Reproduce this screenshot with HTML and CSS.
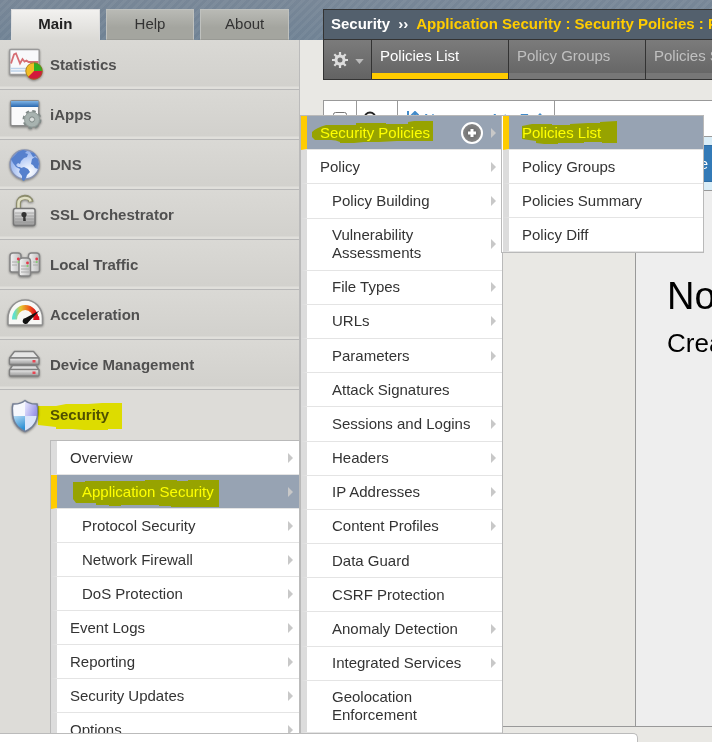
FILE: index.html
```html
<!DOCTYPE html>
<html lang="en">
<head>
<meta charset="utf-8">
<title>Application Security: Policies List</title>
<link rel="stylesheet" href="styles.css">
</head>
<body>
<svg class="defs" aria-hidden="true">
  <defs>
    <linearGradient id="metal" x2="0" y2="1"><stop offset="0" stop-color="#f1f1f1"/><stop offset=".5" stop-color="#c2c2c2"/><stop offset="1" stop-color="#9a9a9a"/></linearGradient>
    <linearGradient id="server" x2="1" y2="0"><stop offset="0" stop-color="#f4f4f4"/><stop offset="1" stop-color="#bcbcbc"/></linearGradient>
    <linearGradient id="titlebar" x2="0" y2="1"><stop offset="0" stop-color="#7fb4e6"/><stop offset="1" stop-color="#2b68ae"/></linearGradient>
    <linearGradient id="dial" x2="1" y2="0"><stop offset="0" stop-color="#5fe0cf"/><stop offset=".3" stop-color="#e6c52d"/><stop offset=".65" stop-color="#f0641c"/><stop offset="1" stop-color="#dd0a18"/></linearGradient>
    <radialGradient id="ocean" cx=".65" cy=".75" r=".8"><stop offset="0" stop-color="#ffffff"/><stop offset=".5" stop-color="#c5d6f8"/><stop offset="1" stop-color="#82a5e8"/></radialGradient>
    <linearGradient id="shieldblue" x2=".4" y2="1"><stop offset="0" stop-color="#b8dcf4"/><stop offset="1" stop-color="#2b8fd4"/></linearGradient>
    <linearGradient id="shieldviolet" x2="1" y2=".4"><stop offset="0" stop-color="#e9e9ff"/><stop offset="1" stop-color="#9c98e8"/></linearGradient>
    <radialGradient id="plusfill"><stop offset="0" stop-color="#636363"/><stop offset="1" stop-color="#8a8a8a"/></radialGradient>
  </defs>
</svg>

<div class="app">
  <aside class="sidebar">
    <nav class="modes" aria-label="Console sections">
      <a class="mode mode-current" href="#">Main</a>
      <a class="mode" href="#">Help</a>
      <a class="mode" href="#">About</a>
    </nav>
    <nav class="modules" aria-label="Modules">
      <a class="module" href="#">
        <svg class="module-icon" viewBox="0 0 40 40" aria-hidden="true">
          <rect x="5.700" y="6.500" width="29.500" height="25" rx="1" fill="#f8f9fb" stroke="#999" stroke-width="1.500"/>
          <path d="M6.500 25.500h28M6.500 28h28" stroke="#bcd2ea" stroke-width="1.600"/>
          <path d="M7 20.500l3-9 2-1 4 10 2.500-4.500 2 2.500 2-1 2 1.500h10" fill="none" stroke="#d66e74" stroke-width="1.800"/>
          <circle cx="30" cy="28" r="8.500" fill="#f2bd25"/><path d="M30 28v-8.500a8.500 8.500 0 0 1 8.500 8.500z" fill="#32ae22"/><path d="M30 28h8.500a8.500 8.500 0 0 1-14.500 6z" fill="#d2183b"/><circle cx="30" cy="28" r="8.200" fill="none" stroke="#8d6c26" stroke-opacity=".7"/>
        </svg><span>Statistics</span></a>
      <a class="module" href="#">
        <svg class="module-icon" viewBox="0 0 40 40" aria-hidden="true">
          <rect x="6.700" y="7.700" width="28" height="25" rx="1.500" fill="#fafafb" stroke="#8b8b8b" stroke-width="1.500"/>
          <path d="M7 8h27.500v6H7z" fill="url(#titlebar)"/>
          <circle cx="28" cy="26.500" r="8.200" fill="none" stroke="#808a88" stroke-width="2.600" stroke-dasharray="3.440 3"/>
          <circle cx="28" cy="26.500" r="5.200" fill="none" stroke="#a8b3b0" stroke-width="5.200"/>
          <circle cx="28" cy="26.500" r="7.500" fill="none" stroke="#8b9593" stroke-width=".8"/><circle cx="28" cy="26.500" r="2.600" fill="#d9dedc" stroke="#7d8785"/>
        </svg><span>iApps</span></a>
      <a class="module" href="#">
        <svg class="module-icon" viewBox="0 0 40 40" aria-hidden="true">
          <circle cx="20.700" cy="21.500" r="14.600" fill="url(#ocean)" stroke="#8793b4" stroke-width="1.500"/>
          <path d="M10 13l4-4 5-2 4 1-2 2 3 1-1 3-3 1-3 3-1 3-2-1-2 2 2 2 2 0 1 1 3-1 4 2 2 3-3 3-1 3-2 3-2-1v-4l-3-4 1-3-4-2-3-4-2-4zM28 16l3-2 3 2 1 5-1 5-3-1-2-3-2-1zM26 9l4 1 2 3-3 1z" fill="#5680cd"/>
        </svg><span>DNS</span></a>
      <a class="module" href="#">
        <svg class="module-icon" viewBox="0 0 40 40" aria-hidden="true">
          <path d="M14.500 16V10.500c0-8 12-8 12.500-1.500" fill="none" stroke="#8c8c6c" stroke-width="5"/><path d="M14.500 16V10.500c0-7 11.500-7 12-2" fill="none" stroke="#e0dfc4" stroke-width="2.600"/>
          <rect x="9.500" y="15.500" width="21.500" height="17" rx="2" fill="url(#metal)" stroke="#777" stroke-width="1.500"/>
          <path d="M11 20h19M11 23h19M11 26h19M11 29h19" stroke="#8e8e8e" stroke-opacity=".6"/>
          <circle cx="20" cy="21.500" r="2.600" fill="#333"/><path d="M19.200 22h2.200l.4 6h-2.600z" fill="#333"/>
        </svg><span>SSL Orchestrator</span></a>
      <a class="module" href="#">
        <svg class="module-icon" viewBox="0 0 40 40" aria-hidden="true">
          <g fill="url(#server)" stroke="#858585" stroke-width="1.500"><path d="M6 13q0-3 3-3h5q3 0 3 3v14q0 2-2 2H8q-2 0-2-2z"/><path d="M24.500 13q0-3 3-3h5q3 0 3 3v14q0 2-2 2h-7q-2 0-2-2z"/><path d="M15 18.500q0-3.500 3.500-3.500h4.500q3.500 0 3.500 3.500v12.500q0 2-2 2H17q-2 0-2-2z"/></g>
          <path d="M8 19h5M8 22h5M17 23h8M17 26h8M17 29h8M29 19h5M29 22h5" stroke="#aaa"/>
          <g fill="#e53a4b"><circle cx="14.300" cy="16" r="1.400"/><circle cx="23.500" cy="20" r="1.400"/><circle cx="32.700" cy="16" r="1.400"/></g>
          <g fill="#7fd36c"><circle cx="14.300" cy="19" r="1"/><circle cx="23.500" cy="23" r="1"/><circle cx="32.700" cy="19" r="1"/></g>
        </svg><span>Local Traffic</span></a>
      <a class="module" href="#">
        <svg class="module-icon" viewBox="0 0 40 40" aria-hidden="true">
          <path d="M4 31v-5.500C4 15 11.500 7 21.200 7s17.300 8 17.300 18.500V31q0 1-1 1H5q-1 0-1-1z" fill="#f8f8f6" stroke="#909090" stroke-width="1.600"/>
          <path d="M10.500 26.500a10.700 12 0 0 1 21.500 0" fill="none" stroke="url(#dial)" stroke-width="5"/>
          <path d="M28.500 27l6.500-4 .5 4z" fill="#d90b1a"/>
          <path d="M35.500 17.500L24.500 29a3 3 0 1 1-3-4z" fill="#111"/>
        </svg><span>Acceleration</span></a>
      <a class="module" href="#">
        <svg class="module-icon" viewBox="0 0 40 40" aria-hidden="true">
          <g stroke="#808080" stroke-width="1.400" stroke-linejoin="round"><path d="M5.500 27l3-4.500h23.500l3 4.500z" fill="#ddd"/><path d="M5.500 15l5-6.500h19l5.500 6.500z" fill="#e6e6e6"/><rect x="5.500" y="15" width="29.500" height="6.500" rx="1" fill="url(#metal)"/><rect x="5.500" y="26.500" width="29.500" height="6.500" rx="1" fill="url(#metal)"/></g>
          <g fill="#e84552"><rect x="28.500" y="17" width="3" height="2.500"/><rect x="28.500" y="28.500" width="3" height="2.500"/></g>
        </svg><span>Device Management</span></a>
      <div class="module-open">
        <a class="module module-current" href="#">
          <svg class="module-icon" viewBox="0 0 40 40" aria-hidden="true">
            <path d="M21 6.500q5 4 12 3.500 1 3 .5 8 0 14-12.500 19.500Q8.500 32 8.500 18 8 13 9 10q7 .5 12-3.500z" fill="#f6f8fd"/>
            <path d="M21 22v15.500Q9 32 8.700 22z" fill="url(#shieldblue)"/><path d="M21 22V7q5 4 12 3 1 4 .3 12z" fill="url(#shieldviolet)"/><path d="M21 22h12.300Q32 33 21 37.500z" fill="#dbe5fa"/>
            <path d="M21 6.500q5 4 12 3.500 1 3 .8 8 0 14-12.800 19.500Q8.500 32 8.500 18 8 13 9 10q7 .5 12-3.500z" fill="none" stroke="#747f95" stroke-width="1.600"/>
          </svg>
          <span class="marked">Security<svg class="marker marker-module" viewBox="0 0 84 28" preserveAspectRatio="none" aria-hidden="true"><path d="M0 3h18l10-2h22l14-1h20v26H70v1H46l-12-1H18v-2L0 22z" fill="#ff0"/></svg></span></a>
        <ul class="menu menu-security">
          <li class="item has-more"><a href="#">Overview</a></li>
          <li class="item item-sub item-active has-more"><a href="#"><span class="marked">Application Security<svg class="marker marker-application" viewBox="0 0 146 28" preserveAspectRatio="none" aria-hidden="true"><path d="M0 2h12V1h60V0h32v1h11V0h31v27H98v-1H86v-1H48v1H36v-1H23v-2H3l-3-4z" fill="#ff0"/></svg></span></a></li>
          <li class="item item-sub has-more"><a href="#">Protocol Security</a></li>
          <li class="item item-sub has-more"><a href="#">Network Firewall</a></li>
          <li class="item item-sub has-more"><a href="#">DoS Protection</a></li>
          <li class="item has-more"><a href="#">Event Logs</a></li>
          <li class="item has-more"><a href="#">Reporting</a></li>
          <li class="item has-more"><a href="#">Security Updates</a></li>
          <li class="item has-more"><a href="#">Options</a></li>
        </ul>
      </div>
    </nav>
  </aside>

  <main class="page">
    <div class="crumbs"><span>Security</span><span>››</span><a href="#">Application Security : Security Policies : Policies List</a></div>
    <div class="toolbar">
      <button class="settings" type="button" aria-label="Settings">
        <svg class="gear" viewBox="0 0 16 16" aria-hidden="true"><circle cx="8" cy="8" r="4" fill="none" stroke="#ddd" stroke-width="3"/><path d="M8 0v4M8 12v4M0 8h4M12 8h4M2.300 2.300l3 3M10.700 10.700l3 3M13.700 2.300l-3 3M5.300 10.700l-3 3" stroke="#ddd" stroke-width="2.200"/></svg>
        <svg class="caret" viewBox="0 0 10 6" aria-hidden="true"><path d="M0 0h10L5 6z" fill="#bbb"/></svg>
      </button>
      <a class="tab tab-current" href="#">Policies List</a>
      <a class="tab" href="#">Policy Groups</a>
      <a class="tab" href="#">Policies Summary</a>
    </div>
    <section class="policies">
      <div class="filters">
        <label class="cell cell-check"><input type="checkbox" aria-label="Select all"></label>
        <button class="cell cell-search" type="button" aria-label="Search"><svg class="search" viewBox="0 0 16 16" aria-hidden="true"><circle cx="7" cy="7" r="5.500" fill="none" stroke="#222" stroke-width="2"/><path d="M11 11l4 4" stroke="#222" stroke-width="2"/></svg></button>
        <button class="cell cell-sort" type="button"><svg class="sort" viewBox="0 0 13 16" aria-hidden="true"><path d="M2 0v14M9 15V1M5 5l4-4 4 4" fill="none" stroke="#428bca" stroke-width="2"/></svg><span>Name</span><span class="order">A to Z</span><svg class="up" viewBox="0 0 12 12" aria-hidden="true"><path d="M6 0l6 6H8v6H4V6H0z" fill="#428bca"/></svg></button>
      </div>
      <div class="split">
        <div class="list"></div>
        <div class="detail">
          <div class="actions"><button class="create" type="button">Create</button></div>
          <div class="empty"><h1>No policies</h1><p>Create a new policy</p></div>
        </div>
      </div>
    </section>
  </main>

  <ul class="menu menu-application">
    <li class="item item-active has-more"><a href="#"><span class="marked">Security Policies<svg class="marker marker-policies" viewBox="0 0 121 23" preserveAspectRatio="none" aria-hidden="true"><path d="M0 11q4-4 14-7h30V2h30v1h22V1q8-2 25-1v20H85l-18 1H52l-10 1H28v-1q-4-2-9-2H3l-3-3z" fill="#ff0"/></svg></span></a>
      <button class="add" type="button" aria-label="Create security policy"><svg class="plus" viewBox="0 0 24 24" aria-hidden="true"><circle cx="12" cy="12" r="10" fill="url(#plusfill)" stroke="#fff" stroke-width="2"/><path d="M12 8v8M8 12h8" stroke="#fff" stroke-width="3"/></svg></button></li>
    <li class="item has-more"><a href="#">Policy</a></li>
    <li class="item item-sub has-more"><a href="#">Policy Building</a></li>
    <li class="item item-sub has-more"><a href="#">Vulnerability Assessments</a></li>
    <li class="item item-sub has-more"><a href="#">File Types</a></li>
    <li class="item item-sub has-more"><a href="#">URLs</a></li>
    <li class="item item-sub has-more"><a href="#">Parameters</a></li>
    <li class="item item-sub"><a href="#">Attack Signatures</a></li>
    <li class="item item-sub has-more"><a href="#">Sessions and Logins</a></li>
    <li class="item item-sub has-more"><a href="#">Headers</a></li>
    <li class="item item-sub has-more"><a href="#">IP Addresses</a></li>
    <li class="item item-sub has-more"><a href="#">Content Profiles</a></li>
    <li class="item item-sub"><a href="#">Data Guard</a></li>
    <li class="item item-sub"><a href="#">CSRF Protection</a></li>
    <li class="item item-sub has-more"><a href="#">Anomaly Detection</a></li>
    <li class="item item-sub has-more"><a href="#">Integrated Services</a></li>
    <li class="item item-sub"><a href="#">Geolocation Enforcement</a></li>
  </ul>

  <ul class="menu menu-policies">
    <li class="item item-active"><a href="#"><span class="marked">Policies List<svg class="marker marker-list" viewBox="0 0 95 24" preserveAspectRatio="none" aria-hidden="true"><path d="M0 5l10-2h20v1h18V3l18-1h12V1l17-1v22H80v-1H62v1H36v1H22l-8-1v-2L0 18z" fill="#ff0"/></svg></span></a></li>
    <li class="item"><a href="#">Policy Groups</a></li>
    <li class="item"><a href="#">Policies Summary</a></li>
    <li class="item"><a href="#">Policy Diff</a></li>
  </ul>
  <div class="status"></div>
</div>
</body>
</html>
```
FILE: styles.css
```css
* { box-sizing: border-box; }

body {
  margin: 0;
  font: 15px/18px "Liberation Sans", Arial, sans-serif;
  color: #333;
  background: #e9e8e4;
}

a { color: inherit; text-decoration: none; }
button { font: inherit; border: 0; margin: 0; padding: 0; background: none; }
ul { list-style: none; margin: 0; padding: 0; }
.defs { position: absolute; width: 0; height: 0; }

.app {
  position: relative;
  display: grid;
  grid-template-columns: 300px minmax(0, 1fr);
  height: 100vh;
  overflow: hidden;
  background:
    repeating-linear-gradient(135deg, #6f809244 0 3px, #8796a444 3px 6px) 0 0 / 100% 40px no-repeat,
    linear-gradient(#7b8999, #708395) 0 0 / 100% 40px no-repeat,
    #e9e8e4;
}

/* Sidebar */
.sidebar { display: flex; flex-direction: column; min-height: 0; }

.modes { display: flex; gap: 6px; padding: 9px 11px 0; }
.mode {
  flex: 1;
  height: 31px;
  padding-top: 5px;
  text-align: center;
  background: linear-gradient(#b9bab5, #a4a59f 60%);
  border: 1px solid #bfc1be;
  border-bottom-color: #999a95;
}
.mode-current {
  font-weight: bold;
  color: #222;
  background: linear-gradient(#f2f1ef, #dbdad6);
  border-color: #ddd #ddd #dbdad6;
}

.modules { flex: 1; background: #dddcd8; border-right: 1px solid #bbb; }
.module {
  display: flex;
  align-items: center;
  gap: 6px;
  height: 50px;
  padding-left: 4px;
  font-weight: bold;
  color: #505050;
  background: linear-gradient(#dad9d5, #d2d1cd 46px, #e0dfdb 47px);
  border-bottom: 1px solid #b9b9b9;
}
.module-icon {
  flex: none;
  width: 40px;
  height: 40px;
  margin-bottom: 3px;
  filter: drop-shadow(0 1px 1px #0006);
}
.module-current { background: none; border-bottom: 0; }

/* Menus */
.menu { background: #fff; color: #333; }
.item {
  position: relative;
  display: flex;
  align-items: center;
  min-height: 34px;
  padding: 7px 29px 7px 13px;
  border-left: 6px solid #dcdcdc;
  border-bottom: 1px solid #e4e4e4;
}
.item > a { flex: 1; }
.item-sub { padding-left: 25px; }
.item-active { color: #fff; background: #97a3b3; border-left-color: #fc0; }
.has-more::after {
  content: "";
  position: absolute;
  top: calc(50% - 5px);
  right: 6px;
  border: solid transparent;
  border-width: 5px 0 5px 5px;
  border-left-color: #c8c8c8;
}

.menu-security { margin-left: 50px; border: solid #b9b9b9; border-width: 1px 0 0 1px; }
.menu-application {
  position: absolute;
  top: 115px;
  bottom: 8px;
  left: 300px;
  width: 203px;
  display: flex;
  flex-direction: column;
  border: 1px solid #b9b9b9;
}
.menu-application .item { flex: 1 0 auto; }
.menu-policies {
  position: absolute;
  top: 115px;
  left: 501px;
  width: 203px;
  padding-left: 1px;
  border: 1px solid #b9b9b9;
}

.add { position: absolute; top: 5px; right: 18px; width: 24px; height: 24px; }
.plus { display: block; width: 24px; height: 24px; }

/* Highlighter strokes over labels */
.marked { position: relative; }
.marker { position: absolute; top: -3px; mix-blend-mode: multiply; pointer-events: none; }
.marker-module { left: -12px; width: 84px; height: 28px; }
.marker-application { left: -9px; width: 146px; height: 28px; }
.marker-policies { left: -8px; width: 121px; height: 23px; }
.marker-list { left: 0; width: 95px; height: 24px; }

/* Page */
.page { display: flex; flex-direction: column; min-width: 0; padding: 9px 0 15px 23px; }
.crumbs {
  display: flex;
  gap: 8px;
  height: 31px;
  padding: 5px 7px;
  font-weight: bold;
  white-space: nowrap;
  overflow: hidden;
  color: #fff;
  background: #53606d;
  border: 1px solid #333;
  border-right: 0;
}
.crumbs a { color: #fc0; }

.toolbar {
  display: flex;
  height: 40px;
  overflow: hidden;
  background: linear-gradient(#7b7b7b, #636363);
  border: solid #333;
  border-width: 0 0 1px 1px;
}
.settings { flex: none; display: flex; align-items: center; gap: 7px; width: 47px; padding-left: 8px; }
.gear { width: 16px; height: 16px; }
.caret { width: 9px; height: 5px; margin-top: 4px; }
.tab {
  flex: none;
  width: 137px;
  padding: 7px 8px;
  color: #c0c0c0;
  white-space: nowrap;
  border-left: 1px solid #333;
  box-shadow: inset 0 -6px #777;
}
.tab-current { color: #fff; box-shadow: inset 0 -6px #fc0; }

.policies { flex: 1; display: flex; flex-direction: column; margin-top: 20px; border: solid #999; border-width: 1px 0 1px 1px; }
.filters { display: flex; height: 35px; background: #fff; }
.cell { display: flex; align-items: center; border-right: 1px solid #999; }
.cell-check { width: 33px; justify-content: center; }
.cell-check input { width: 14px; height: 14px; margin: 0; }
.cell-search { width: 41px; padding-left: 6px; }
.search { width: 16px; height: 16px; }
.cell-sort { width: 157px; padding: 0 8px; gap: 5px; color: #428bca; }
.sort { width: 13px; height: 16px; }
.order { margin-left: auto; }
.up { width: 12px; height: 14px; }

.split { flex: 1; display: grid; grid-template-columns: 311px minmax(0, 1fr); }
.detail { overflow: hidden; background: #eee; border: solid #999; border-width: 1px 0 0 1px; }
.actions { height: 54px; padding: 8px 0 8px 17px; background: #d9edf7; border-bottom: 1px solid #999; }
.create { height: 37px; padding: 0 12px; font-size: 14px; color: #fff; background: #337ab7; border: 1px solid #2e6da4; }
.empty { padding: 83px 0 0 31px; color: #000; white-space: nowrap; }
.empty h1 { margin: 0; font-size: 38px; line-height: 44px; font-weight: normal; }
.empty p { margin: 10px 0 0; font-size: 26px; line-height: 30px; }

.status {
  position: absolute;
  left: 0;
  bottom: 0;
  width: 638px;
  max-width: 100%;
  height: 9px;
  background: #fff;
  border: solid #bbb;
  border-width: 1px 1px 0 0;
  border-radius: 0 5px 0 0;
}
```
